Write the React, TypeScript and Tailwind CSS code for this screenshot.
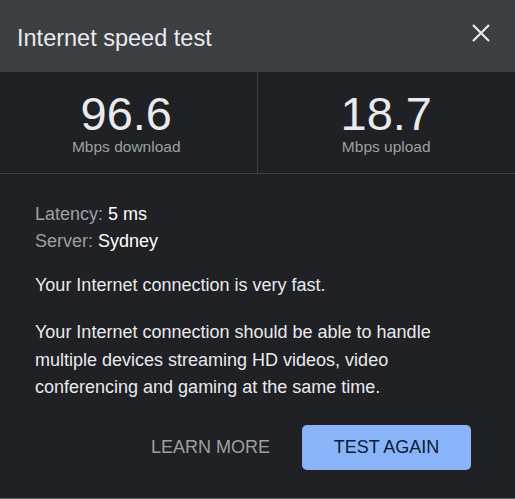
export default function App() {
  return (
    <div
      className="flex h-[499px] w-[515px] flex-col bg-[#202124] text-[#e8eaed]"
      style={{ fontFamily: '"Liberation Sans", Arial, sans-serif' }}
    >
      {/* header */}
      <div className="flex h-[72px] items-center justify-between bg-[#3c4043] pl-[17px] pr-[25px]">
        <h1 className="pt-[6px] text-[23.5px] text-[#e8eaed]">Internet speed test</h1>
        <button className="mb-[6px] text-[#e8eaed]" aria-label="Close">
          <svg width="18" height="18" viewBox="0 0 18 18">
            <path d="M1 1 L17 17 M17 1 L1 17" stroke="currentColor" strokeWidth="2.2" />
          </svg>
        </button>
      </div>

      {/* stats */}
      <div className="grid h-[102px] grid-cols-2 border-b border-[#3c4043]">
        <div className="flex flex-col items-center justify-center border-r border-[#3c4043] pr-[4px] pt-[1px]">
          <div className="text-[47px] leading-[48px] text-[#e8eaed]">96.6</div>
          <div className="text-[15.5px] leading-[18px] text-[#9aa0a6]">Mbps download</div>
        </div>
        <div className="flex flex-col items-center justify-center pt-[1px]">
          <div className="text-[47px] leading-[48px] text-[#e8eaed]">18.7</div>
          <div className="text-[15.5px] leading-[18px] text-[#9aa0a6]">Mbps upload</div>
        </div>
      </div>

      {/* details */}
      <div className="flex flex-1 flex-col border-b border-[#5f6368] px-[35px] pt-[27px] text-[18px] leading-[27px]">
        <div>
          <span className="text-[#9aa0a6]">Latency: </span>
          <span className="text-white">5 ms</span>
        </div>
        <div>
          <span className="text-[#9aa0a6]">Server: </span>
          <span className="text-white">Sydney</span>
        </div>
        <p className="mt-[17px]">Your Internet connection is very fast.</p>
        <p className="mt-[20px] leading-[27.5px]">
          Your Internet connection should be able to handle multiple devices streaming HD
          videos, video conferencing and gaming at the same time.
        </p>

        <div className="mt-[23px] flex items-center justify-end gap-[32px] pr-[9px]">
          <button className="text-[18px] text-[#9aa0a6]">LEARN MORE</button>
          <button className="h-[45px] w-[169px] rounded-[5px] bg-[#8ab4f8] text-[18px] text-[#0b1a33]">
            TEST AGAIN
          </button>
        </div>
      </div>
    </div>
  );
}
